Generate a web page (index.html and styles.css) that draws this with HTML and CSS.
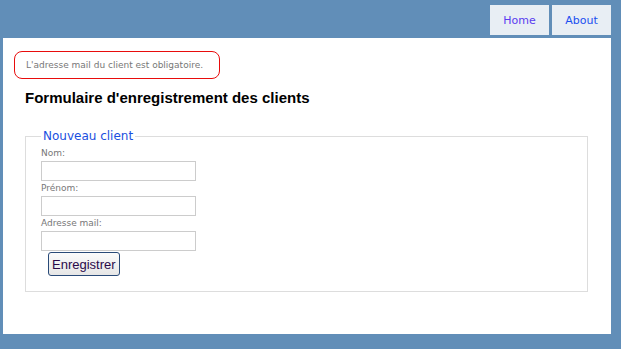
FILE: index.html
```html
<!DOCTYPE html>
<html lang="fr">
<head>
    <meta charset="UTF-8" />
    <title>Enregistrement des clients</title>
    <link rel="stylesheet" href="styles.css">
</head>
<body>

<div class="page">
    <div class="header">
        <ul class="menu">
            <li><a href="#" class="visited">Home</a></li>
            <li><a href="#">About</a></li>
        </ul>
    </div>

    <div class="main">
        <div class="validation-summary">L'adresse mail du client est obligatoire.</div>

        <h2>Formulaire d'enregistrement des clients</h2>

        <form>
            <fieldset>
                <legend>Nouveau client</legend>

                <div class="editor-label"><label for="nom">Nom:</label></div>
                <div class="editor-field"><input type="text" id="nom" name="nom" /></div>

                <div class="editor-label"><label for="prenom">Prénom:</label></div>
                <div class="editor-field"><input type="text" id="prenom" name="prenom" /></div>

                <div class="editor-label"><label for="mail">Adresse mail:</label></div>
                <div class="editor-field"><input type="text" id="mail" name="mail" /></div>

                <input type="submit" class="submit" value="Enregistrer" />
            </fieldset>
        </form>
    </div>
</div>

</body>
</html>
```

FILE: styles.css
```css
body {
    margin: 0;
    background: #618eb8;
    font-family: "DejaVu Sans", "Liberation Sans", sans-serif;
    font-size: 10px;
    color: #777;
}
.header {
    height: 38px;
    display: flex;
    justify-content: flex-end;
}
.menu {
    list-style: none;
    margin: 5px 10px 0 0;
    padding: 0;
    display: flex;
    gap: 3px;
    height: 30px;
}
.menu a {
    display: flex;
    align-items: center;
    justify-content: center;
    width: 59px;
    height: 30px;
    background: #e8eef4;
    color: #1a4ff0;
    text-decoration: none;
    font-size: 11px;
}
.menu a.visited { color: #5a3cf0; }

.main {
    background: #fff;
    margin: 0 10px 0 3px;
    height: 296px;
    padding: 13px 23px 0 11px;
    box-sizing: border-box;
}
.validation-summary {
    width: 206px;
    height: 28px;
    box-sizing: border-box;
    border: 1px solid #e80c0c;
    border-radius: 8px;
    padding: 0 11px;
    line-height: 26px;
    font-size: 9px;
}
h2 {
    margin: 9px 0 0 11px;
    font-family: "Liberation Sans", sans-serif;
    font-size: 15px;
    color: #000;
    line-height: 20px;
}
fieldset {
    margin: 21px 0 0 11px;
    padding: 3px 15px 15px 15px;
    border: 1px solid #ddd;
}
legend {
    color: #1a4fe0;
    font-size: 12px;
    padding: 0 2px;
}
.editor-label {
    line-height: 15px;
    height: 15px;
    font-size: 9px;
}
.editor-field input {
    width: 155px;
    height: 20px;
    box-sizing: border-box;
    border: 1px solid #ccc;
    margin: 0;
    padding: 2px;
}
.submit {
    margin: 1px 0 0 7px;
    height: 24px;
    padding: 0 3px;
    font-family: "Liberation Sans", sans-serif;
    font-size: 13px;
    color: #2a0a4a;
    background: linear-gradient(#fbfbfb, #e6e6e6);
    border: 1px solid #294a78;
    border-radius: 3px;
}
```
